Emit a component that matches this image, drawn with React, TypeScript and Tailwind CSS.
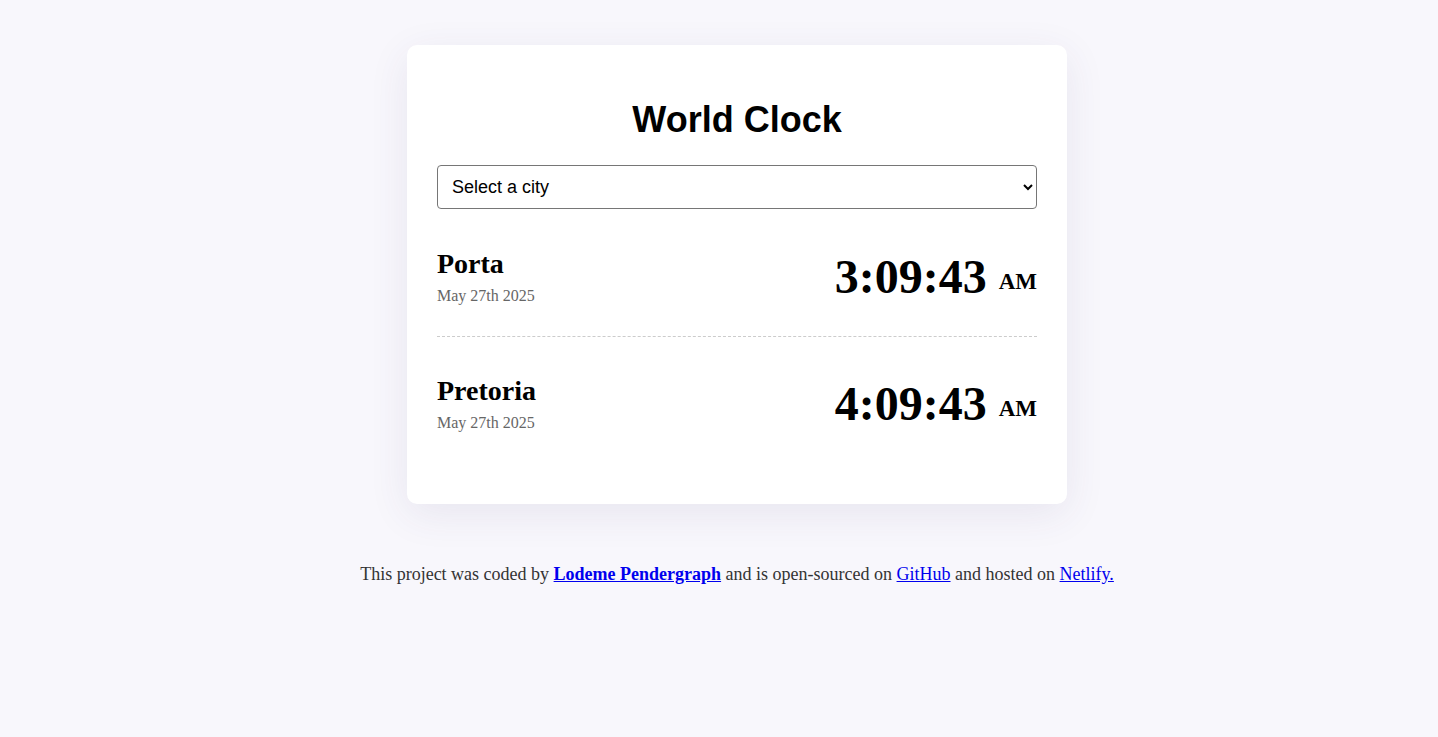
const cities = [
  { name: 'Porta', date: 'May 27th 2025', time: '3:09:43', ampm: 'AM' },
  { name: 'Pretoria', date: 'May 27th 2025', time: '4:09:43', ampm: 'AM' },
];

export default function App() {
  return (
    <div className="min-h-screen bg-[#f8f7fc] pl-[36px] pt-[45px] font-['Liberation_Serif',serif] text-black">
      <div className="w-[660px] mx-auto bg-white rounded-[10px] px-[30px] pt-[30px] pb-[41px] shadow-[0_10px_40px_rgba(65,50,110,0.09)]">
        <h1 className="mt-[24px] mb-[25px] text-center text-[36px] leading-[41px] font-bold font-['Liberation_Sans',Arial,sans-serif]">
          World Clock
        </h1>
        <select
          defaultValue=""
          className="block w-full h-[44px] px-[10px] border border-[#767676] rounded-[4px] bg-white text-[18px] font-['Liberation_Sans',Arial,sans-serif]"
        >
          <option value="">Select a city</option>
          <option value="current">My current location</option>
          <option value="Africa/Johannesburg">Pretoria</option>
        </select>

        <div>
          {cities.map((city, i) => (
            <div
              key={city.name}
              className={
                i < cities.length - 1
                  ? 'flex items-center justify-between h-[128px] pt-[41px] pb-[33px] border-b border-dashed border-[#cccccc]'
                  : 'flex items-center justify-between h-[126px] pt-[40px] pb-[33px]'
              }
            >
              <div className="h-[53px]">
                <h2 className="text-[28px] leading-[28px] font-bold">{city.name}</h2>
                <div className="mt-[9px] text-[16px] leading-[18px] text-[#666666]">{city.date}</div>
              </div>
              <div className="h-[53px] text-[48px] leading-[53px] font-bold whitespace-nowrap">
                {city.time}{' '}
                <small className="text-[23px] leading-none align-middle">{city.ampm}</small>
              </div>
            </div>
          ))}
        </div>
      </div>

      <p className="mt-[60px] text-center text-[18px] leading-[21px] text-[#333333]">
        This project was coded by{' '}
        <a href="#" className="font-bold text-[#0000ee] underline">
          Lodeme Pendergraph
        </a>{' '}
        and is open-sourced on{' '}
        <a href="#" className="text-[#0000ee] underline">
          GitHub
        </a>{' '}
        and hosted on{' '}
        <a href="#" className="text-[#0000ee] underline">
          Netlify.
        </a>
      </p>
    </div>
  );
}
